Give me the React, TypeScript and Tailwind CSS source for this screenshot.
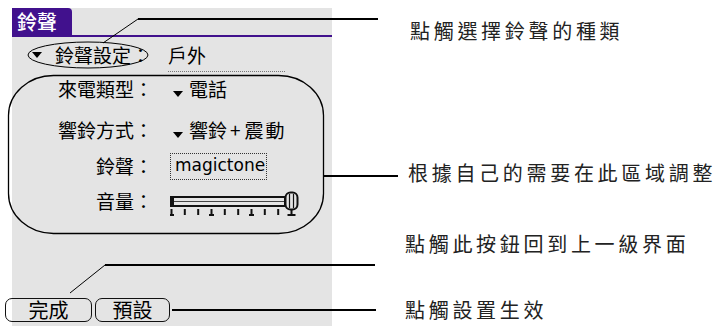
import React from "react";

const palm = { fontFamily: '"Noto Sans CJK TC", "Noto Sans", sans-serif' };

function Tri() {
  return <span className="inline-block w-0 h-0 border-x-[5px] border-x-transparent border-t-[6px] border-t-black" />;
}

function Slider() {
  const ticks = [0, 13.3, 26.7, 40, 53.3, 66.7, 80, 93.3, 106.7];
  const big = [0, 40, 80];
  return (
    <svg width="132" height="26" viewBox="0 0 132 26">
      <rect x="1" y="6" width="114" height="9" fill="#e4e4e4" stroke="#111" strokeWidth="2" />
      <line x1="3" y1="10.5" x2="114" y2="10.5" stroke="#444" strokeWidth="1" />
      <rect x="0" y="7" width="4" height="7" fill="#111" />
      {ticks.map((t) => (
        <line key={t} x1={t + 1.5} y1="18" x2={t + 1.5} y2="24" stroke="#111" strokeWidth="2" />
      ))}
      {big.map((t) => (
        <line key={"b" + t} x1={t - 1} y1="24" x2={t + 4} y2="24" stroke="#111" strokeWidth="2" />
      ))}
      <rect x="115.5" y="1.5" width="12" height="17" rx="5" fill="#e4e4e4" stroke="#111" strokeWidth="2" />
      <line x1="119.5" y1="3" x2="119.5" y2="17" stroke="#111" strokeWidth="1.2" />
      <line x1="123.5" y1="3" x2="123.5" y2="17" stroke="#111" strokeWidth="1.2" />
      <line x1="121.5" y1="18" x2="121.5" y2="23" stroke="#111" strokeWidth="2" />
      <line x1="117.5" y1="24" x2="125.5" y2="24" stroke="#111" strokeWidth="2" />
    </svg>
  );
}

export default function App() {
  return (
    <div className="relative w-[721px] h-[326px] bg-white overflow-hidden flex">
      {/* Palm screen */}
      <div
        className="ml-[12px] mt-[8px] w-[320px] h-[318px] bg-[#e4e4e4] flex flex-col shrink-0 text-[19px] text-black font-normal"
        style={palm}
      >
        <div className="flex h-[29px] border-b-2 border-[#41118d] shrink-0">
          <div className="h-full w-[60px] bg-[#41118d] rounded-tr-[4px] text-white text-[20px] leading-[27px] pl-[5px] font-medium">
            鈴聲
          </div>
        </div>

        <div className="mt-[6px] h-[24px] flex items-start pl-[20px] shrink-0">
          <div className="h-[24px] flex items-center">
            <Tri />
          </div>
          <span className="ml-[13px] leading-[24px]">鈴聲設定：</span>
          <span className="ml-[18px] w-[117px] h-[29px] leading-[24px] border-b border-dotted border-[#777]">戶外</span>
        </div>

        <div className="mt-[10px] h-[24px] flex items-center shrink-0">
          <span className="w-[141px] text-right leading-[24px]">來電類型：</span>
          <span className="ml-[20px]"><Tri /></span>
          <span className="ml-[6px] leading-[24px]">電話</span>
        </div>

        <div className="mt-[17px] h-[24px] flex items-center shrink-0">
          <span className="w-[141px] text-right leading-[24px]">響鈴方式：</span>
          <span className="ml-[20px]"><Tri /></span>
          <span className="ml-[6px] leading-[24px]">響鈴</span>
          <span className="ml-[3px] leading-[24px]">+</span>
          <span className="ml-[4px] leading-[24px] tracking-[2px]">震動</span>
        </div>

        <div className="mt-[12px] h-[24px] flex items-center shrink-0">
          <span className="w-[141px] text-right leading-[24px]">鈴聲：</span>
          <span
            className="ml-[17px] w-[97px] h-[27px] border border-dotted border-[#333] flex items-center pl-[4px] text-[17px]"
            style={{ fontFamily: '"DejaVu Sans", sans-serif' }}
          >
            magictone
          </span>
        </div>

        <div className="mt-[11px] h-[24px] flex items-center shrink-0">
          <span className="w-[141px] text-right leading-[24px]">音量：</span>
          <span className="ml-[17px] mt-[6px]"><Slider /></span>
        </div>

        <div className="mt-auto mb-[4px] -ml-[7px] flex gap-[3px] shrink-0">
          <div className="w-[87px] h-[24px] border-[1.5px] border-[#111] rounded-[7px] flex items-center justify-center text-[20px] leading-[22px]">
            完成
          </div>
          <div className="w-[75px] h-[24px] border-[1.5px] border-[#111] rounded-[7px] flex items-center justify-center text-[20px] leading-[22px]">
            預設
          </div>
        </div>
      </div>

      {/* Annotations */}
      <div
        className="flex flex-col pl-[74px] text-[20px] leading-[24px] tracking-[3.7px] text-[#222] whitespace-nowrap"
        style={palm}
      >
        <div className="mt-[19px] ml-[4px]">點觸選擇鈴聲的種類</div>
        <div className="mt-[118px] ml-[2px]">根據自己的需要在此區域調整</div>
        <div className="mt-[47px] -ml-[1px]">點觸此按鈕回到上一級界面</div>
        <div className="mt-[42px] -ml-[1px]">點觸設置生效</div>
      </div>

      {/* Callout drawing */}
      <svg className="absolute inset-0 pointer-events-none" width="721" height="326" viewBox="0 0 721 326">
        <line x1="138" y1="19" x2="378" y2="19" stroke="#000" strokeWidth="2" />
        <line x1="138" y1="19" x2="103" y2="43" stroke="#000" strokeWidth="1" />
        <ellipse cx="88" cy="55" rx="60" ry="13" fill="none" stroke="#000" strokeWidth="1" />
        <rect x="8.5" y="75.5" width="315" height="158" rx="45" ry="40" fill="none" stroke="#000" strokeWidth="1.3" />
        <line x1="323" y1="176" x2="398" y2="176" stroke="#000" strokeWidth="2" />
        <line x1="105" y1="265" x2="375" y2="265" stroke="#000" strokeWidth="2" />
        <line x1="105" y1="265" x2="70" y2="293" stroke="#000" strokeWidth="1" />
        <line x1="172" y1="310" x2="376" y2="310" stroke="#000" strokeWidth="2" />
      </svg>
    </div>
  );
}
